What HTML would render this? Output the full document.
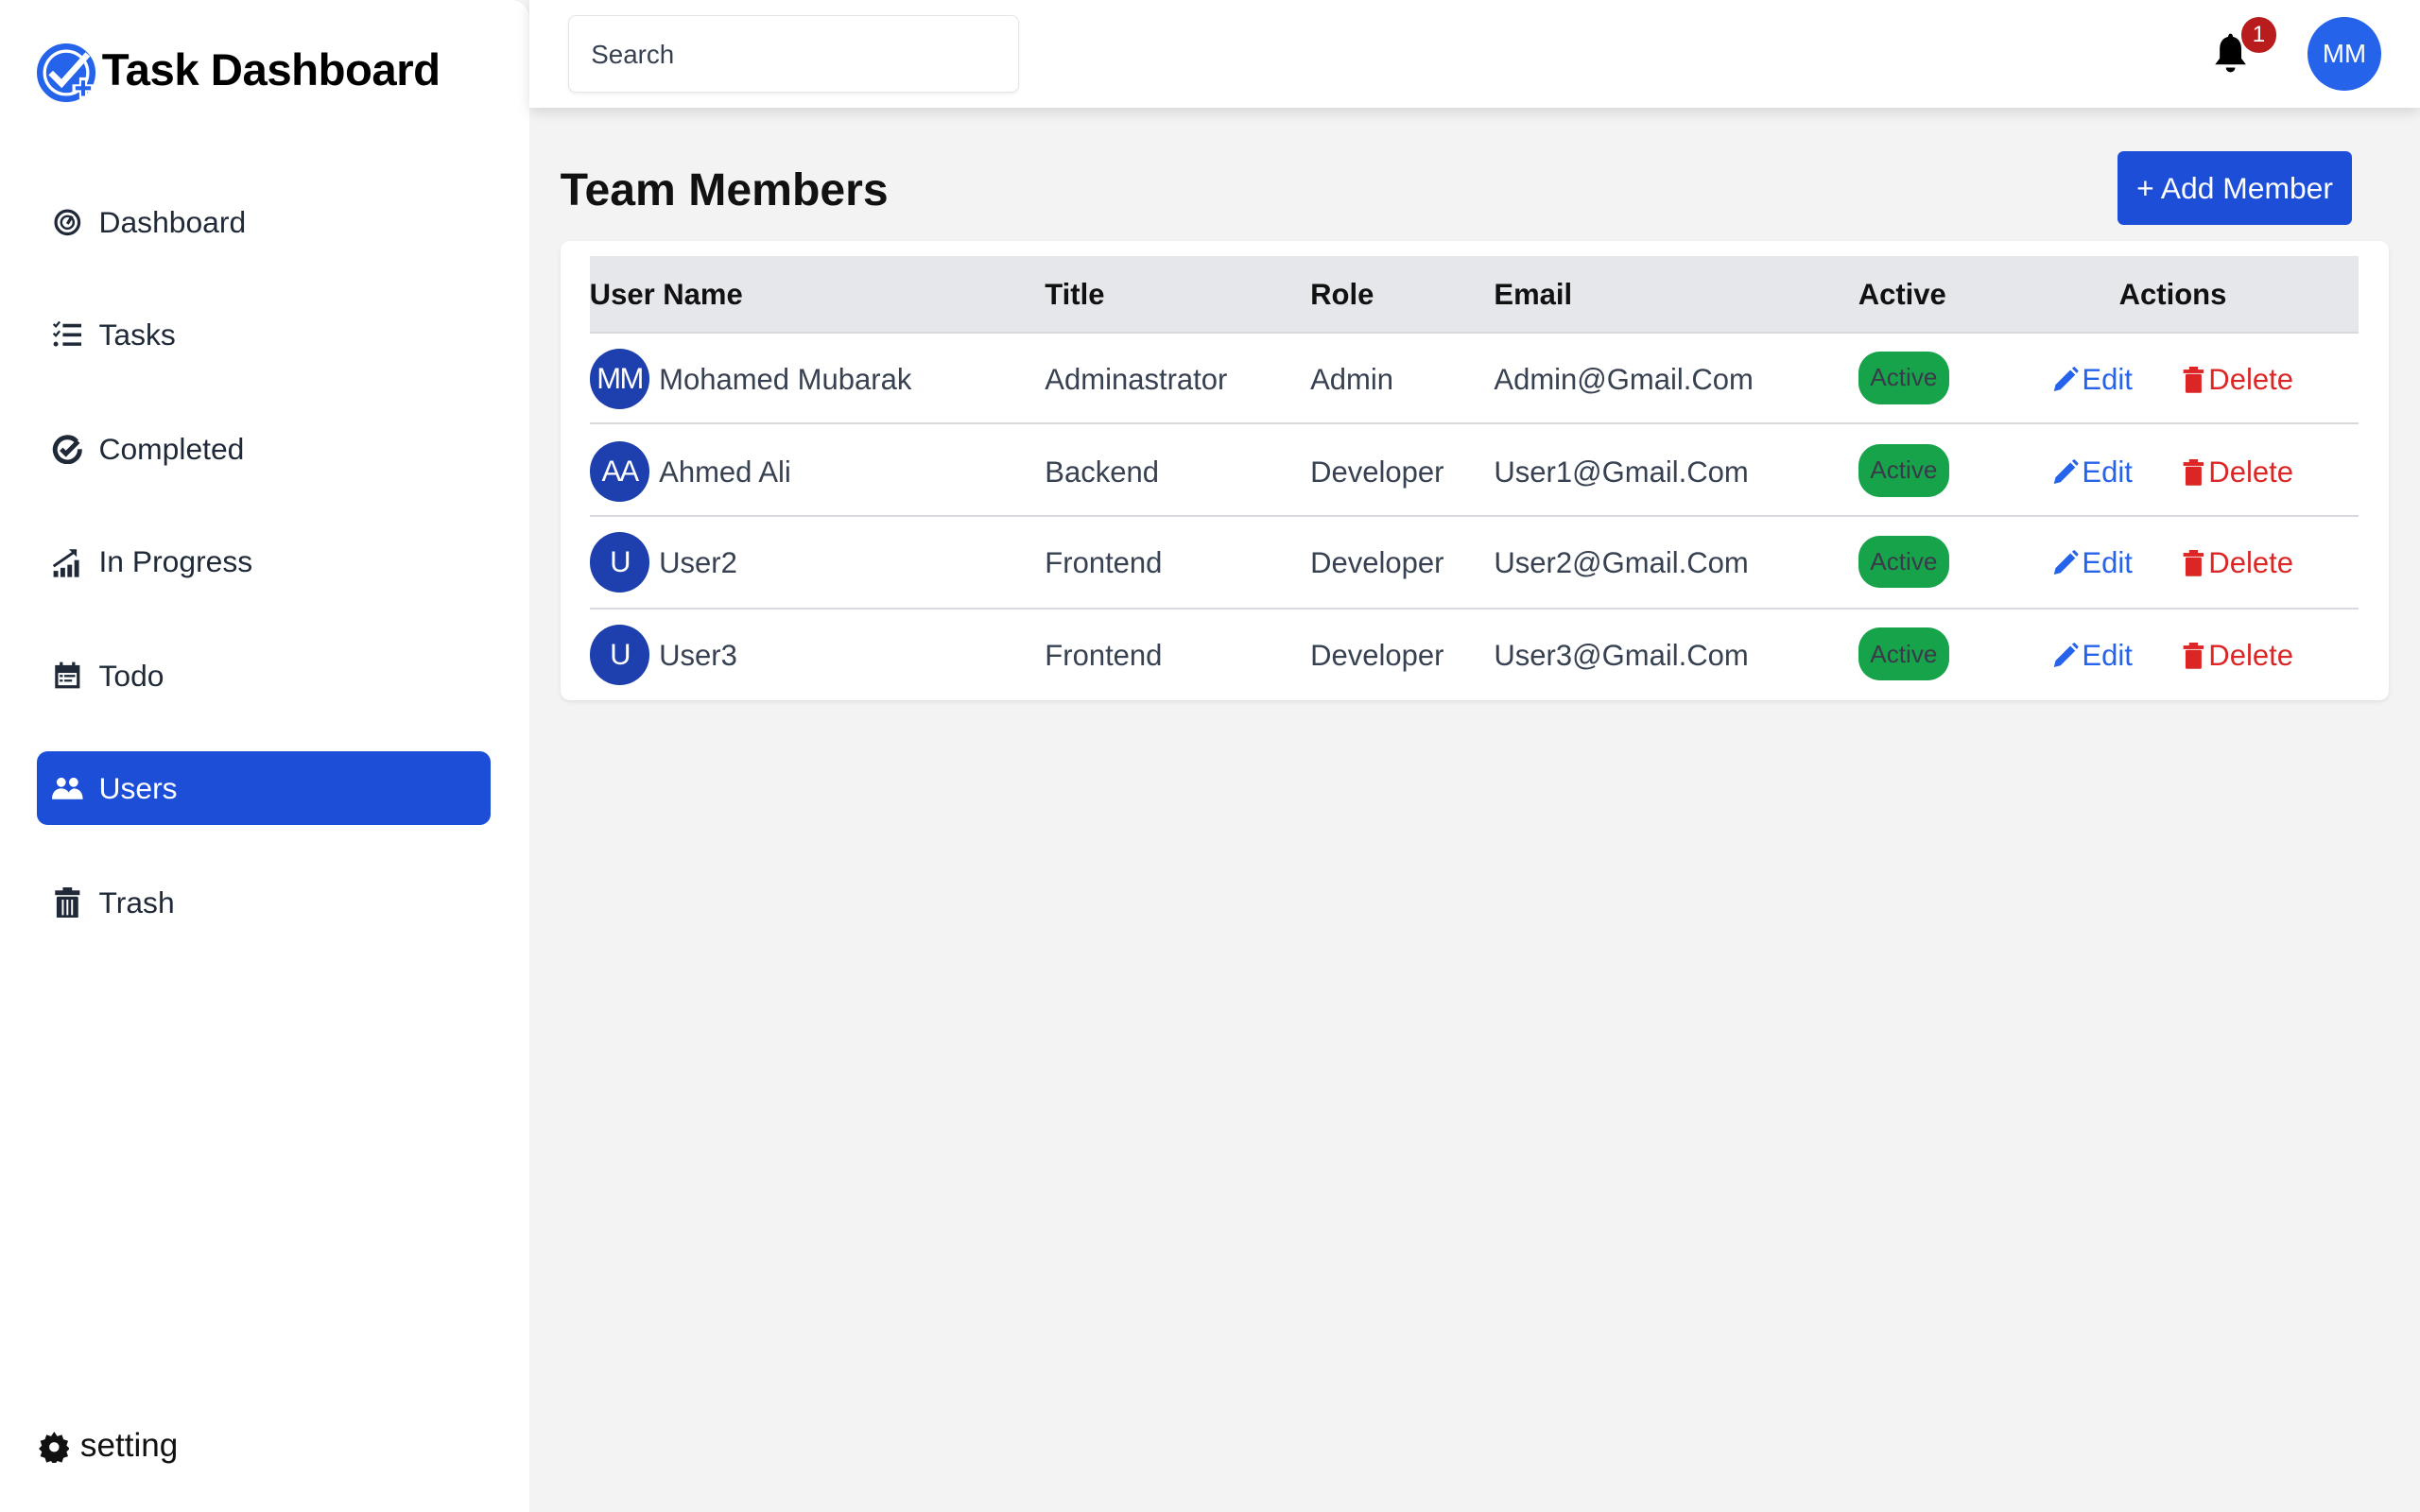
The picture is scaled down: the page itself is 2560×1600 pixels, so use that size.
<!DOCTYPE html>
<html><head><meta charset="utf-8"><style>
html,body{margin:0;padding:0;width:2560px;height:1600px;overflow:hidden;background:#f3f3f3;}
#root{zoom:1.63265;width:1568px;height:980px;position:relative;font-family:"Liberation Sans",Arial,sans-serif;color:#1f2937;}
.abs{position:absolute}
#side{left:0;top:0;width:343px;height:980px;background:#fff;border-top-right-radius:12px}
#top{left:343px;top:0;width:1225px;height:70px;background:#fff;box-shadow:0 3px 8px rgba(0,0,0,.12)}
.nav{position:absolute;left:24px;width:294px;height:48px;display:flex;align-items:center;font-size:19.5px;color:#1f2937;border-radius:7px}
.nav svg{position:absolute;left:10px;width:20px;height:20px}
.nav span{position:absolute;left:40px}
.nav.act{background:#1d4ed8;color:#fff}
.cell{position:absolute;font-size:19px;color:#374151;white-space:nowrap}
.hd{position:absolute;font-size:19px;font-weight:bold;color:#111;top:180px}
.av{position:absolute;left:382px;width:39px;height:39px;border-radius:50%;background:#1e40af;color:#fff;font-size:19px;display:flex;align-items:center;justify-content:center;letter-spacing:-1px}
.badge{position:absolute;left:1204px;width:59px;height:34px;border-radius:14px;background:#16a34a;color:#3a3a4a;font-size:16px;display:flex;align-items:center;justify-content:center}
.line{position:absolute;left:382px;width:1146px;height:1px;background:#d6d9de}
.edit{position:absolute;left:1330px;color:#2563eb;font-size:19px;display:flex;align-items:center}
.del{position:absolute;left:1414px;color:#dc2626;font-size:19px;display:flex;align-items:center}
.edit svg{margin-right:2px}.del svg{margin-right:3px}
</style></head><body><div id="root">
<div id="side" class="abs"></div>
<svg class="abs" style="left:24px;top:28px" width="38" height="38" viewBox="0 0 38 38">
<circle cx="19" cy="19" r="17" fill="none" stroke="#2563eb" stroke-width="4"/>
<circle cx="19" cy="19" r="13" fill="#2563eb"/>
<path d="M9 19 L16 26 L33 7" fill="none" stroke="#fff" stroke-width="4"/>
<path d="M30 22 V36 M23 29 H37" stroke="#fff" stroke-width="5"/>
<path d="M30 24 V34 M25 29 H35" stroke="#2563eb" stroke-width="2.5"/>
</svg>
<div class="abs" style="left:66px;top:29px;font-size:29px;font-weight:bold;color:#000;letter-spacing:-0.3px">Task Dashboard</div>

<div class="nav" style="top:120px"><svg viewBox="0 0 20 20"><circle cx="10" cy="10" r="7.5" fill="none" stroke="#1f2937" stroke-width="2"/><circle cx="10" cy="10" r="4" fill="none" stroke="#1f2937" stroke-width="1.5"/><path d="M10 11 L13 6" stroke="#1f2937" stroke-width="2"/></svg><span>Dashboard</span></div>
<div class="nav" style="top:193px"><svg viewBox="0 0 20 20"><path d="M1 3l1.5 1.5L5 1.5M1 9l1.5 1.5L5 7.5" fill="none" stroke="#1f2937" stroke-width="1.4"/><circle cx="2.5" cy="16" r="1.5" fill="#1f2937"/><path d="M7 4h12M7 10h12M7 16h12" stroke="#1f2937" stroke-width="2.2"/></svg><span>Tasks</span></div>
<div class="nav" style="top:267px"><svg viewBox="0 0 20 20"><path d="M16 5A8 8 0 1 0 18 10" fill="none" stroke="#1f2937" stroke-width="3"/><path d="M6 10l3 3 8-8" fill="none" stroke="#1f2937" stroke-width="3"/></svg><span>Completed</span></div>
<div class="nav" style="top:340px"><svg viewBox="0 0 20 20"><path d="M1 13L14 4" stroke="#1f2937" stroke-width="1.8"/><path d="M11 2h5v5z" fill="#1f2937"/><rect x="1" y="16" width="3" height="4" fill="#1f2937"/><rect x="5.5" y="14" width="3" height="6" fill="#1f2937"/><rect x="10" y="12" width="3" height="8" fill="#1f2937"/><rect x="14.5" y="9" width="3" height="11" fill="#1f2937"/></svg><span>In Progress</span></div>
<div class="nav" style="top:414px"><svg viewBox="0 0 20 20"><rect x="2" y="3" width="16" height="15" fill="#1f2937"/><rect x="4" y="8" width="12" height="8" fill="#fff"/><rect x="5" y="1" width="2" height="4" fill="#1f2937"/><rect x="13" y="1" width="2" height="4" fill="#1f2937"/><path d="M5 10h2M8 10h7M5 13h2M8 13h5" stroke="#1f2937" stroke-width="1.4"/></svg><span>Todo</span></div>
<div class="nav act" style="top:487px"><svg viewBox="0 0 20 20"><circle cx="6" cy="6" r="3" fill="#fff"/><circle cx="14" cy="6" r="3" fill="#fff"/><path d="M0 17c0-5 3-7 6-7s6 2 6 7zM10 17c0-3 1-5 2-6 1-.5 2-1 2-1 3 0 6 2 6 7z" fill="#fff"/></svg><span>Users</span></div>
<div class="nav" style="top:561px"><svg viewBox="0 0 20 20"><rect x="2" y="2" width="16" height="3" fill="#1f2937"/><rect x="7" y="0" width="6" height="3" fill="#1f2937"/><rect x="3" y="6" width="14" height="14" rx="1" fill="#1f2937"/><path d="M7 8v10M10 8v10M13 8v10" stroke="#fff" stroke-width="1.2"/></svg><span>Trash</span></div>

<svg class="abs" style="left:25px;top:928px" width="20" height="20" viewBox="0 0 20 20"><path d="M10 0l2 3 3-1 1 3 3 1-1 3 2 2-2 2 1 3-3 1-1 3-3-1-2 3-2-3-3 1-1-3-3-1 1-3-2-2 2-2-1-3 3-1 1-3 3 1z" fill="#111"/><circle cx="10" cy="10" r="3.2" fill="#fff"/></svg>
<div class="abs" style="left:52px;top:925px;font-size:21.5px;color:#111">setting</div>

<div id="top" class="abs"></div>
<div class="abs" style="left:368px;top:10px;width:291px;height:49px;border:1px solid #e2e4e8;border-radius:5px;background:#fff;box-shadow:0 1px 2px rgba(0,0,0,.06)"></div>
<div class="abs" style="left:383px;top:26px;font-size:17px;color:#374151">Search</div>
<svg class="abs" style="left:1433px;top:21px" width="24" height="28" viewBox="0 0 24 28"><path d="M12 1c1 0 1.5 1 1.5 2 4 1 5.5 4 5.5 8v6l3 4H2l3-4v-6c0-4 1.5-7 5.5-8 0-1 .5-2 1.5-2z" fill="#000"/><path d="M9 23a3 3 0 0 0 6 0z" fill="#000"/></svg>
<div class="abs" style="left:1452px;top:11px;width:23px;height:23px;border-radius:50%;background:#b91c1c;color:#fff;font-size:15px;display:flex;align-items:center;justify-content:center">1</div>
<div class="abs" style="left:1495px;top:11px;width:48px;height:48px;border-radius:50%;background:#2563eb;color:#fff;font-size:17px;display:flex;align-items:center;justify-content:center">MM</div>

<div class="abs" style="left:363px;top:106px;font-size:29.5px;font-weight:bold;color:#111">Team Members</div>
<div class="abs" style="left:1372px;top:98px;width:152px;height:48px;border-radius:4px;background:#1d4ed8;color:#fff;font-size:19.5px;display:flex;align-items:center;justify-content:center">+ Add Member</div>

<div class="abs" style="left:363px;top:156px;width:1185px;height:298px;background:#fff;border-radius:6px;box-shadow:0 1px 3px rgba(0,0,0,.08)"></div>
<div class="abs" style="left:382px;top:166px;width:1146px;height:49px;background:#e5e7eb"></div>
<div class="hd" style="left:382px">User Name</div>
<div class="hd" style="left:677px">Title</div>
<div class="hd" style="left:849px">Role</div>
<div class="hd" style="left:968px">Email</div>
<div class="hd" style="left:1204px">Active</div>
<div class="hd" style="left:1373px">Actions</div>
<div class="line" style="top:215px"></div>
<div class="line" style="top:274px"></div>
<div class="line" style="top:334px"></div>
<div class="line" style="top:394px"></div>

<div class="av" style="top:226px">MM</div><div class="cell" style="left:427px;top:235px">Mohamed Mubarak</div>
<div class="cell" style="left:677px;top:235px">Adminastrator</div><div class="cell" style="left:849px;top:235px">Admin</div><div class="cell" style="left:968px;top:235px">Admin@Gmail.Com</div>
<div class="badge" style="top:228px">Active</div>
<div class="av" style="top:286px">AA</div><div class="cell" style="left:427px;top:295px">Ahmed Ali</div>
<div class="cell" style="left:677px;top:295px">Backend</div><div class="cell" style="left:849px;top:295px">Developer</div><div class="cell" style="left:968px;top:295px">User1@Gmail.Com</div>
<div class="badge" style="top:288px">Active</div>
<div class="av" style="top:345px">U</div><div class="cell" style="left:427px;top:354px">User2</div>
<div class="cell" style="left:677px;top:354px">Frontend</div><div class="cell" style="left:849px;top:354px">Developer</div><div class="cell" style="left:968px;top:354px">User2@Gmail.Com</div>
<div class="badge" style="top:347px">Active</div>
<div class="av" style="top:405px">U</div><div class="cell" style="left:427px;top:414px">User3</div>
<div class="cell" style="left:677px;top:414px">Frontend</div><div class="cell" style="left:849px;top:414px">Developer</div><div class="cell" style="left:968px;top:414px">User3@Gmail.Com</div>
<div class="badge" style="top:407px">Active</div>

<div class="edit" style="top:235px"><svg width="17" height="17" viewBox="0 0 16 16"><path d="M1 15l1-4 9-9 3 3-9 9z" fill="#2563eb"/><path d="M12 1l1.5-1 2.5 2.5-1 1.5z" fill="#2563eb"/></svg>Edit</div>
<div class="del" style="top:235px"><svg width="14" height="17" viewBox="0 0 14 18"><rect x="0" y="2" width="14" height="2.5" fill="#dc2626"/><rect x="4" y="0" width="6" height="3" fill="#dc2626"/><rect x="1.5" y="5" width="11" height="13" rx="1" fill="#dc2626"/></svg>Delete</div>
<div class="edit" style="top:295px"><svg width="17" height="17" viewBox="0 0 16 16"><path d="M1 15l1-4 9-9 3 3-9 9z" fill="#2563eb"/><path d="M12 1l1.5-1 2.5 2.5-1 1.5z" fill="#2563eb"/></svg>Edit</div>
<div class="del" style="top:295px"><svg width="14" height="17" viewBox="0 0 14 18"><rect x="0" y="2" width="14" height="2.5" fill="#dc2626"/><rect x="4" y="0" width="6" height="3" fill="#dc2626"/><rect x="1.5" y="5" width="11" height="13" rx="1" fill="#dc2626"/></svg>Delete</div>
<div class="edit" style="top:354px"><svg width="17" height="17" viewBox="0 0 16 16"><path d="M1 15l1-4 9-9 3 3-9 9z" fill="#2563eb"/><path d="M12 1l1.5-1 2.5 2.5-1 1.5z" fill="#2563eb"/></svg>Edit</div>
<div class="del" style="top:354px"><svg width="14" height="17" viewBox="0 0 14 18"><rect x="0" y="2" width="14" height="2.5" fill="#dc2626"/><rect x="4" y="0" width="6" height="3" fill="#dc2626"/><rect x="1.5" y="5" width="11" height="13" rx="1" fill="#dc2626"/></svg>Delete</div>
<div class="edit" style="top:414px"><svg width="17" height="17" viewBox="0 0 16 16"><path d="M1 15l1-4 9-9 3 3-9 9z" fill="#2563eb"/><path d="M12 1l1.5-1 2.5 2.5-1 1.5z" fill="#2563eb"/></svg>Edit</div>
<div class="del" style="top:414px"><svg width="14" height="17" viewBox="0 0 14 18"><rect x="0" y="2" width="14" height="2.5" fill="#dc2626"/><rect x="4" y="0" width="6" height="3" fill="#dc2626"/><rect x="1.5" y="5" width="11" height="13" rx="1" fill="#dc2626"/></svg>Delete</div>
</div></body></html>
